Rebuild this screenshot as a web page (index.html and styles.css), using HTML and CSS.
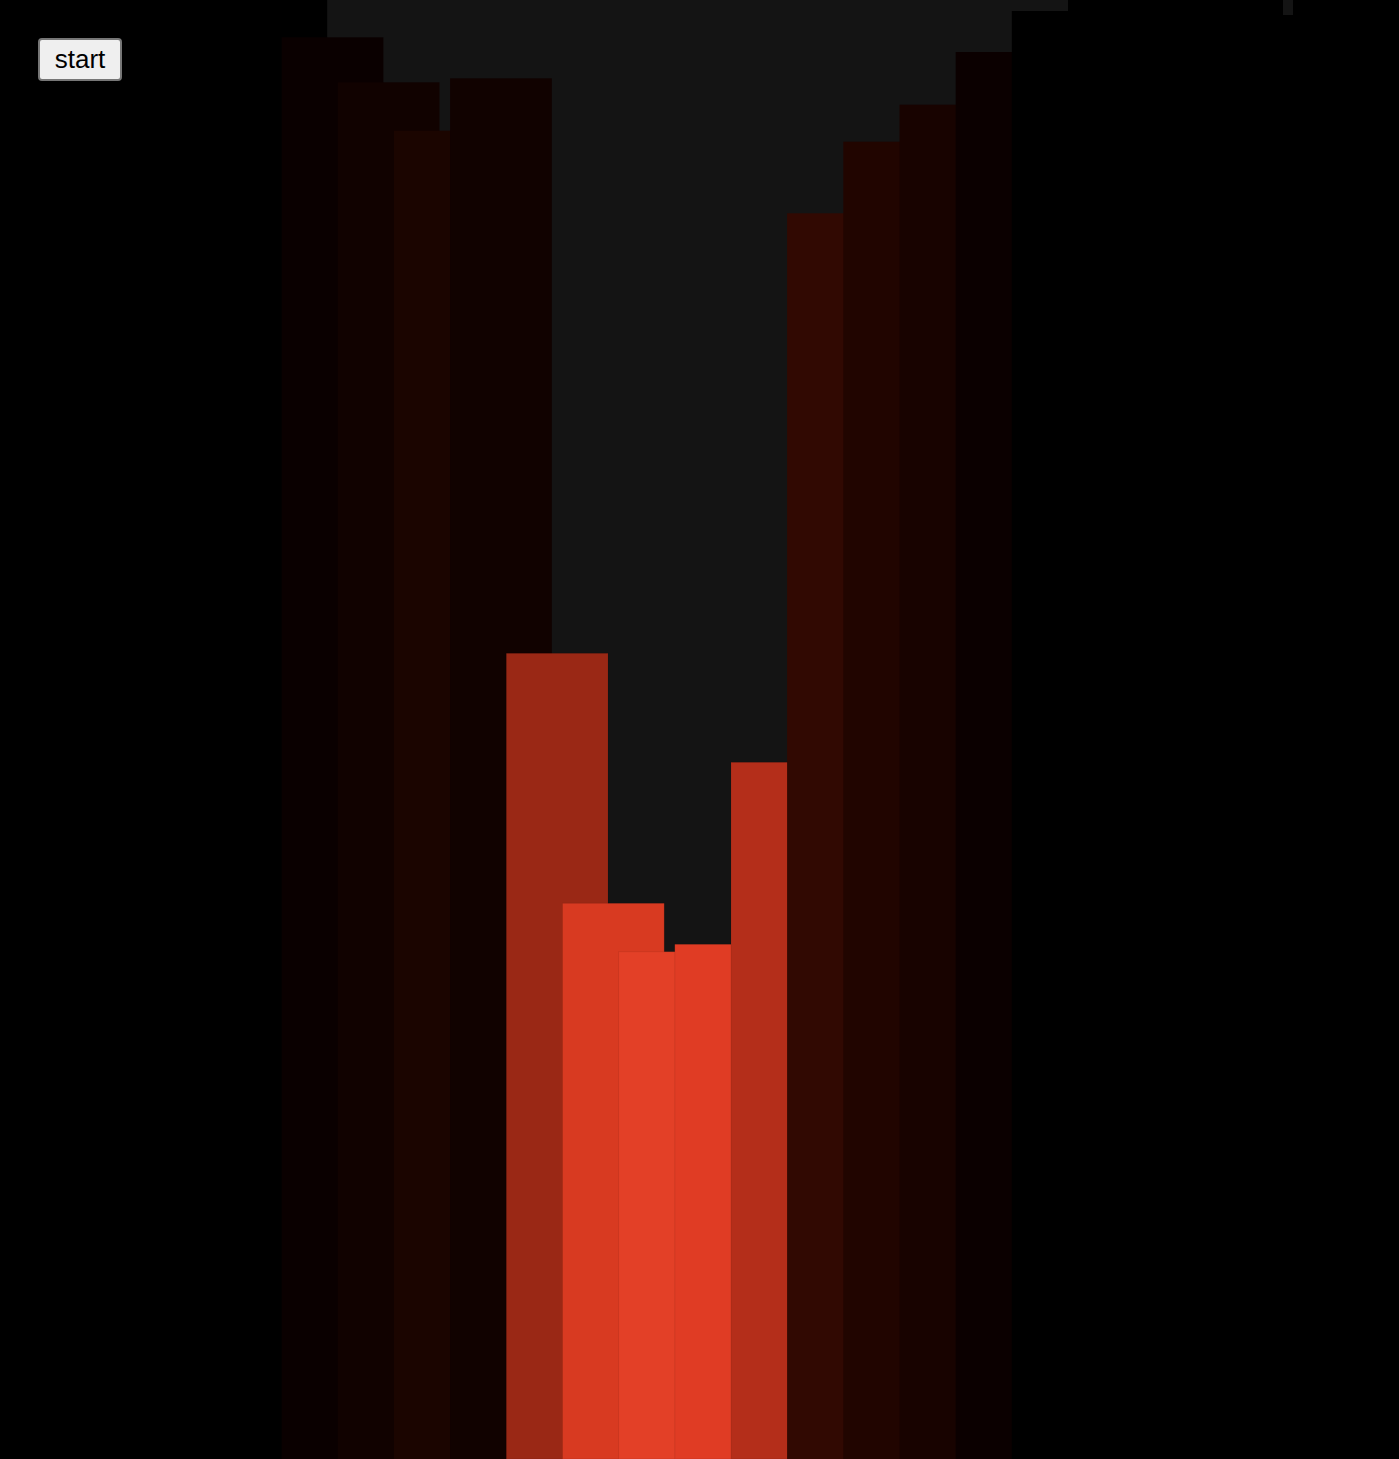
FILE: index.html
```html
<!DOCTYPE html>
<html>
<head>
<meta charset="utf-8">
<title>visualizer</title>
<link rel="stylesheet" href="styles.css">
</head>
<body>
<svg class="chart" width="1399" height="1459" viewBox="0 0 1399 1459" xmlns="http://www.w3.org/2000/svg">
  <rect class="bar" x="0" y="0" width="102.6" height="1459" fill="#000000"/>
  <rect class="bar" x="57.0" y="0" width="101.7" height="1459" fill="#000000"/>
  <rect class="bar" x="113.2" y="0" width="101.7" height="1459" fill="#000000"/>
  <rect class="bar" x="169.4" y="0" width="101.7" height="1459" fill="#000000"/>
  <rect class="bar" x="225.5" y="0" width="101.7" height="1459" fill="#000000"/>
  <rect class="bar" x="281.7" y="37.3" width="101.7" height="1421.7" fill="#0a0000"/>
  <rect class="bar" x="337.8" y="82.3" width="101.7" height="1376.7" fill="#110200"/>
  <rect class="bar" x="394.0" y="130.7" width="101.7" height="1328.3" fill="#1b0500"/>
  <rect class="bar" x="450.1" y="78.3" width="101.7" height="1380.7" fill="#110200"/>
  <rect class="bar hot" x="506.3" y="653.3" width="101.7" height="805.7" fill="#9a2815"/>
  <rect class="bar hot" x="562.5" y="903.3" width="101.7" height="555.7" fill="#d83a21"/>
  <rect class="bar hot" x="618.6" y="951.7" width="101.7" height="507.3" fill="#e34027"/>
  <rect class="bar hot" x="674.8" y="944.3" width="101.7" height="514.7" fill="#e03c24"/>
  <rect class="bar hot" x="731.0" y="762.3" width="101.7" height="696.7" fill="#b42e1a"/>
  <rect class="bar" x="787.1" y="213.3" width="101.7" height="1245.7" fill="#310902"/>
  <rect class="bar" x="843.3" y="141.7" width="101.7" height="1317.3" fill="#210500"/>
  <rect class="bar" x="899.5" y="104.7" width="101.7" height="1354.3" fill="#180300"/>
  <rect class="bar" x="955.7" y="52.0" width="101.7" height="1407" fill="#0b0000"/>
  <rect class="bar" x="1011.8" y="11.0" width="101.7" height="1448" fill="#000000"/>
  <rect class="bar" x="1068.0" y="0" width="101.7" height="1459" fill="#000000"/>
  <rect class="bar" x="1124.2" y="0" width="101.7" height="1459" fill="#000000"/>
  <rect class="bar" x="1180.4" y="0" width="102.6" height="1459" fill="#000000"/>
  <rect class="bar" x="1236.6" y="15.0" width="101.7" height="1444" fill="#000000"/>
  <rect class="bar" x="1293.0" y="0" width="101.7" height="1459" fill="#000000"/>
  <rect class="bar" x="1349.0" y="0" width="101.7" height="1459" fill="#000000"/>
</svg>
<main class="controls">
  <button class="start-btn" type="button">start</button>
</main>
</body>
</html>
```

FILE: styles.css
```css
html, body {
  margin: 0;
  padding: 0;
}

body {
  background: #141414;
  width: 1399px;
  height: 1459px;
  overflow: hidden;
  position: relative;
  font-family: "Liberation Sans", Arial, sans-serif;
}

.chart {
  position: absolute;
  left: 0;
  top: 0;
  display: block;
}

.bar.hot {
  stroke: rgba(0, 0, 0, 0.08);
  stroke-width: 1;
}

.controls {
  position: relative;
  padding: 38px 0 0 38px;
}

.start-btn {
  box-sizing: border-box;
  width: 84px;
  height: 43px;
  padding: 0;
  margin: 0;
  font-family: "Liberation Sans", Arial, sans-serif;
  font-size: 26px;
  line-height: 29px;
  color: #000;
  background: #efefef;
  border: 2px solid #767676;
  border-radius: 4px;
}
```
